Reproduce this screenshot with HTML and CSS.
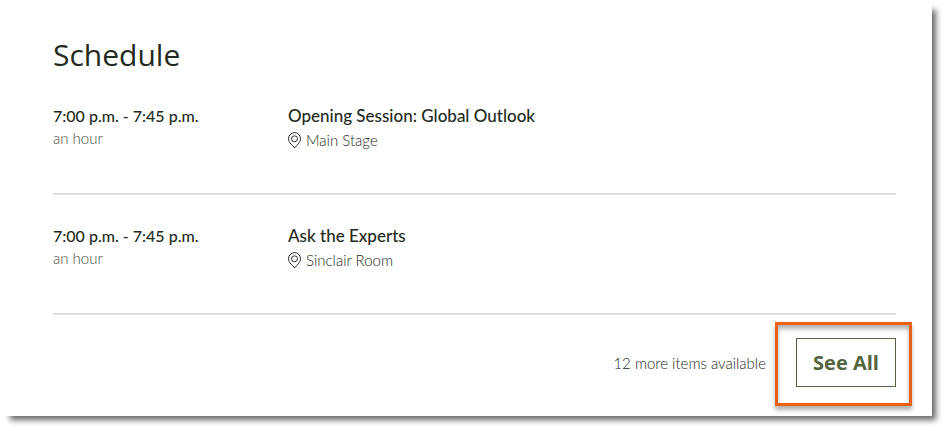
FILE: index.html
```
<!DOCTYPE html>
<html lang="en">
<head>
    <meta charset="UTF-8">
    <title>Schedule</title>
    <link rel="stylesheet" href="styles.css">
</head>
<body>
    <main class="card">
        <h1>Schedule</h1>
        <ul class="sessions">
            <li class="session">
                <div class="time">
                    <p class="hours">7:00 p.m. - 7:45 p.m.</p>
                    <p class="duration">an hour</p>
                </div>
                <div class="details">
                    <h2>Opening Session: Global Outlook</h2>
                    <p class="location">
                        <svg class="pin" viewBox="0 0 14 17" aria-hidden="true">
                            <path d="M6.500 16C5 13.800 .5 10.700 .5 6.800a6 6.200 0 0 1 12 0C12.500 10.700 8 13.800 6.500 16z"/>
                            <circle cx="6.500" cy="6.800" r="3"/>
                        </svg>
                        Main Stage
                    </p>
                </div>
            </li>
            <li class="session">
                <div class="time">
                    <p class="hours">7:00 p.m. - 7:45 p.m.</p>
                    <p class="duration">an hour</p>
                </div>
                <div class="details">
                    <h2>Ask the Experts</h2>
                    <p class="location">
                        <svg class="pin" viewBox="0 0 14 17" aria-hidden="true">
                            <path d="M6.500 16C5 13.800 .5 10.700 .5 6.800a6 6.200 0 0 1 12 0C12.500 10.700 8 13.800 6.500 16z"/>
                            <circle cx="6.500" cy="6.800" r="3"/>
                        </svg>
                        Sinclair Room
                    </p>
                </div>
            </li>
        </ul>
        <div class="more">
            <span class="more_text">12 more items available</span>
            <div class="see_all">
                <button type="button" class="see_all_button">See All</button>
                <div class="highlight"></div>
            </div>
        </div>
    </main>
</body>
</html>
```

FILE: styles.css
```
body {
    font-family: Lato, "Open Sans", sans-serif;
    margin: 0;
    padding: 0 15px 15px 0;
    background-color: #fff;
    color: #232b20;
}
h1, h2, p, ul {
    margin: 0;
    padding: 0;
}
.card {
    padding: 34px 36px 29px 53px;
    background-color: #fff;
    box-shadow: 7px 7px 6px -3px rgba(0, 0, 0, 0.6);
}
h1 {
    font-family: "Open Sans", sans-serif;
    font-size: 30px;
    font-weight: 400;
    line-height: 41px;
}
.sessions {
    list-style: none;
}
.session {
    display: grid;
    grid-template-columns: 235px 1fr;
    box-sizing: border-box;
    min-height: 120px;
    padding-top: 29px;
    border-bottom: 2px solid #dedede;
}
.hours, h2 {
    font-weight: 500;
    line-height: 24px;
}
.hours {
    font-size: 16px;
}
h2 {
    font-size: 17px;
}
.duration, .location, .more_text {
    font-size: 15px;
    line-height: 20px;
    font-weight: 300;
}
.duration {
    color: #4a4f45;
}
.location {
    display: flex;
    align-items: center;
    gap: 4px;
    padding-top: 2px;
}
.pin {
    width: 14px;
    height: 17px;
    fill: none;
    stroke: #2c3329;
    stroke-width: 1;
}
.more {
    display: flex;
    justify-content: flex-end;
    align-items: center;
    gap: 30px;
    padding-top: 23px;
}
.see_all {
    position: relative;
}
.see_all_button {
    display: block;
    width: 100px;
    height: 49px;
    padding: 0;
    border: 1px solid #53643f;
    background-color: #fff;
    color: #53643f;
    font-family: "Open Sans", sans-serif;
    font-size: 20px;
    font-weight: 700;
    cursor: pointer;
}
/* callout frame around the button */
.highlight {
    position: absolute;
    top: -16px;
    right: -16px;
    bottom: -19px;
    left: -21px;
    border: 3px solid #eb6110;
    box-shadow: 0 4px 4px rgba(0, 0, 0, 0.3), inset 0 4px 4px rgba(0, 0, 0, 0.3);
    pointer-events: none;
}
```
